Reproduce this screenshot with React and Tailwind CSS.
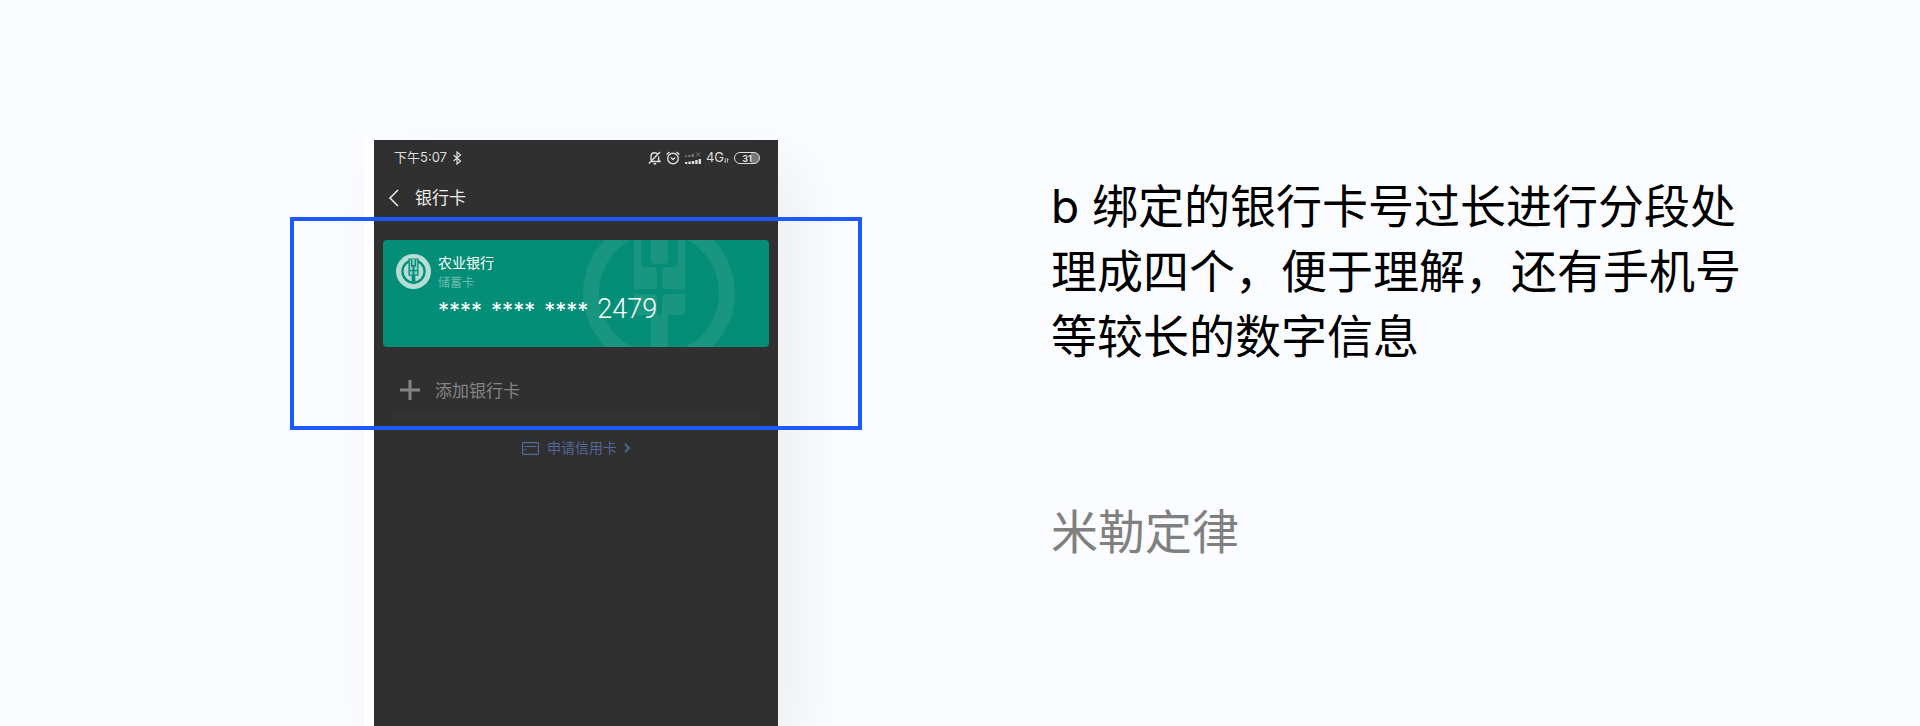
import React from 'react';

const digits = ['****', '****', '****'];

const BankLogo = () => (
    <svg className="w-[35px] h-[35px] mt-[2px] text-[#b4ddd6]" viewBox="0 0 152 152" fill="currentColor" aria-hidden="true">
        <path
            fillRule="evenodd"
            d="M76 0a76 76 0 1 0 0 152a76 76 0 1 0 0-152zM76 23a53 53 0 1 1 0 106a53 53 0 1 1 0-106z"
        />
        <circle cx="76" cy="76" r="43" />
        <path d="M54 20h44v74H84v36H68V94H54z" fill="#048d77" />
        <path d="M60 24h5v30h7v16H60zM92 24h-5v30h-7v16h12zM71 22h10v26H71zM60 75h12v14H60zM80 75h12v14H80z" opacity=".8" />
    </svg>
);

const Watermark = () => (
    <svg className="absolute w-[152px] h-[152px] left-[200px] -top-[23px] text-[#18967f]" viewBox="0 0 152 152" fill="currentColor" aria-hidden="true">
        <path
            fillRule="evenodd"
            d="M76 0a76 76 0 1 0 0 152a76 76 0 1 0 0-152zM76 16a60 60 0 1 1 0 120a60 60 0 1 1 0-120z"
        />
        <path d="M51 20h7v24q0 6 5 6h6q5 0 5 5v13q0 4-4 4q-12 0-19 1z" />
        <path d="M102 20h-7v24q0 6-5 6h-6q-5 0-5 5v13q0 4 4 4q12 0 19 1z" />
        <path d="M68 20h17v23q0 4-4 4h-9q-4 0-4-4z" />
        <path d="M51 76q4 1 9 1h10q4 0 4 4v17H53q-2 0-2-2z" />
        <path d="M102 76q-4 1-9 1H83q-4 0-4 4v17h21q2 0 2-2z" />
        <path d="M68 98h17v38H68z" />
    </svg>
);

const BluetoothIcon = () => (
    <svg className="w-[10px] h-[14px]" viewBox="0 0 10 14" fill="none" stroke="currentColor" strokeWidth="1.2" aria-hidden="true">
        <path d="M1.5 4l7 6L5 13V1l3.500 3l-7 6" />
    </svg>
);

const MutedIcon = () => (
    <svg className="w-[13px] h-[14px]" viewBox="0 0 13 14" fill="none" stroke="currentColor" strokeWidth="1.4" aria-hidden="true">
        <path d="M2 10.500h10L10.600 9V5.500M9.500 3.200C8.800 2.300 7.700 1.800 6.700 1.800C4.500 1.800 3 3.500 3 5.500V9M5.500 12.800h2.600M.8 12.500L12 1" />
    </svg>
);

const AlarmIcon = () => (
    <svg className="w-[14px] h-[14px]" viewBox="0 0 14 14" fill="none" stroke="currentColor" strokeWidth="1.4" aria-hidden="true">
        <circle cx="7" cy="7.500" r="5.300" />
        <path d="M4.800 6.500L7 8.500l2.200-2M.6 3.500L3.500 1M13.400 3.500L10.500 1" />
    </svg>
);

const SignalIcon = () => (
    <svg className="w-4 h-3" viewBox="0 0 16 12" fill="currentColor" aria-hidden="true">
        <path d="M0 10h2.400v2H0zM3.400 9.500h2.400V12H3.400zM6.800 9h2.400v3H6.800zM10.200 8h2.400v4h-2.400zM13.600 7H16v5h-2.400z" />
        <g opacity=".45">
            <path d="M0 3.500h2V5H0zM3.400 3h2v2h-2zM6.800 2h2v3h-2z" />
            <path d="M11.200.5l4 4M15.200.5l-4 4" stroke="currentColor" strokeWidth="1" />
        </g>
    </svg>
);

const StatusBar = () => (
    <div className="flex items-center justify-between h-9 pl-5 pr-[18px] text-[#dedede]">
        <div className="flex items-center gap-[5px] text-[13px]">
            <span>下午5:07</span>
            <BluetoothIcon />
        </div>
        <div className="flex items-center gap-[5px]">
            <MutedIcon />
            <AlarmIcon />
            <SignalIcon />
            <div className="flex items-center text-[13px]">
                <span>4G</span>
                <svg className="w-[5px] h-[5px] mt-1" viewBox="0 0 6 5" stroke="currentColor" fill="none" aria-hidden="true">
                    <path d="M1.500 0v5M0 3.500L1.500 5M4 5V0L5.500 1.500" />
                </svg>
            </div>
            <div className="flex items-center justify-center w-[26px] h-3 rounded-full border border-[#dedede] bg-linear-to-r from-transparent from-65% to-[#777] to-65% text-[9px] leading-none font-bold">
                31
            </div>
        </div>
    </div>
);

const TopBar = () => (
    <header className="flex items-center h-[41px] pt-[2px] pl-[14px] gap-[15px] text-[#ededed]">
        <button type="button" aria-label="返回" className="flex">
            <svg className="w-3 h-[18px]" viewBox="0 0 12 18" fill="none" stroke="currentColor" strokeWidth="1.5" aria-hidden="true">
                <path d="M10 1L2 9l8 8" />
            </svg>
        </button>
        <h1 className="text-[17px] leading-6">银行卡</h1>
    </header>
);

const BankCard = () => (
    <div className="relative overflow-hidden h-[107px] mx-[9px] rounded-[4px] bg-[#048d77] text-white">
        <Watermark />
        <div className="relative flex gap-[7px] pl-[13px] pt-3">
            <BankLogo />
            <div>
                <div className="text-sm leading-[22px]">农业银行</div>
                <div className="text-xs leading-[18px] text-[#68bbad]">储蓄卡</div>
                <div className="flex gap-[9px] pt-[3px]">
                    {digits.map((group, i) => (
                        <span key={i} className="pt-px text-[22px] leading-7">{group}</span>
                    ))}
                    <span className="font-[Roboto,sans-serif] font-light text-[27px] leading-7">2479</span>
                </div>
            </div>
        </div>
    </div>
);

const Phone = () => (
    <div className="flex border-l-10 border-white shadow-[20px_25px_60px_rgba(0,0,0,0.06)]">
        <div className="w-[404px] bg-[#303030]">
            <StatusBar />
            <TopBar />
            <section className="relative h-[213px] pt-[23px]">
                <BankCard />
                <div className="mt-[18px] mx-4 border-b-2 border-[#343434]">
                    <button type="button" className="flex items-center gap-[15px] w-full h-[50px] pl-[10px] text-[17px] text-[#858585]">
                        <svg className="w-5 h-5" viewBox="0 0 20 20" stroke="currentColor" strokeWidth="3" aria-hidden="true">
                            <path d="M10 0v20M0 10h20" />
                        </svg>
                        <span className="pt-[3px]">添加银行卡</span>
                    </button>
                </div>
                <div className="absolute inset-y-0 -inset-x-[84px] border-4 border-[#2058ff] pointer-events-none"></div>
            </section>
            <a href="#apply" className="flex items-center justify-center h-9 text-sm text-[#526899]">
                <svg className="w-[17px] h-[13px] mr-2" viewBox="0 0 17 13" fill="none" stroke="currentColor" strokeWidth="1.2" aria-hidden="true">
                    <rect x=".6" y=".6" width="15.8" height="11.8" rx="1" />
                    <path d="M2.500 4.500h12M2.500 7.500h2" />
                </svg>
                申请信用卡
                <svg className="w-[6px] h-[10px] ml-[7px]" viewBox="0 0 6 10" fill="none" stroke="currentColor" strokeWidth="1.8" aria-hidden="true">
                    <path d="M1 1l4 4l-4 4" />
                </svg>
            </a>
        </div>
    </div>
);

const App = () => {
    return (
        <main className="min-h-screen grid grid-cols-[35fr_29fr] overflow-hidden bg-[#fbfcff] pt-[140px] font-[Inter,'Noto_Sans_CJK_SC',sans-serif]">
            <div className="flex justify-end pr-[272px]">
                <Phone />
            </div>
            <div className="pt-[34px] pl-px">
                <p className="max-w-[700px] text-[46px] leading-[65px] text-black">
                    b 绑定的银行卡号过长进行分段处理成四个，便于理解，还有手机号等较长的数字信息
                </p>
                <h2 className="mt-[130px] text-[47px] leading-[65px] text-[#808080]">米勒定律</h2>
            </div>
        </main>
    );
};

export default App;
